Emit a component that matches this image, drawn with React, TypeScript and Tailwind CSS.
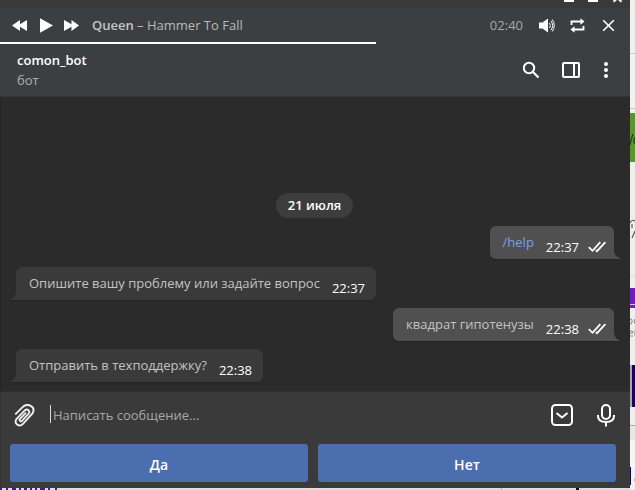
import React from "react";

type MessageProps = { text: string; time: string; out?: boolean; link?: boolean };

function Checks() {
  return (
    <svg className="ml-[9px] h-[12px] w-[19px] shrink-0" viewBox="0 0 19 12" fill="none" stroke="#fff" strokeWidth="1.8">
      <path d="M.8 6.200 4.500 9.800 12.300 1.200M7.800 9.200 9 10.200 17.400 1.200" />
    </svg>
  );
}

function Message({ text, time, out, link }: MessageProps) {
  return (
    <div className={out ? "flex justify-end pr-[10px]" : "flex pl-[10px]"}>
      {!out && (
        <svg className="h-[34px] w-[6px] shrink-0" viewBox="0 0 6 34">
          <path d="M6 24v9H0v-.8C4 31 6 28 6 24Z" fill="#3a3a3a" />
          <path d="M0 33h6v1H0z" fill="#232323" />
        </svg>
      )}
      <div
        className={
          out
            ? "flex h-[33px] rounded-t-[6px] rounded-bl-[6px] bg-[#505050] pl-[13px] pr-[7px] shadow-[0_1px_0_#232323]"
            : "flex h-[33px] rounded-t-[6px] rounded-br-[6px] bg-[#3a3a3a] pl-[13px] pr-[11px] shadow-[0_1px_0_#232323]"
        }
      >
        <span className={link ? "pt-[7px] leading-[18px] text-[#78a0e8]" : "pt-[7px] leading-[18px] text-[#c3c3c3]"}>{text}</span>
        <span className="ml-[12px] flex items-center pt-[8px] leading-[18px] text-white">
          {time}
          {out && <Checks />}
        </span>
      </div>
      {out && (
        <svg className="h-[34px] w-[6px] shrink-0" viewBox="0 0 6 34">
          <path d="M0 24v9h6v-.8C2 31 0 28 0 24Z" fill="#505050" />
          <path d="M0 33h6v1H0z" fill="#232323" />
        </svg>
      )}
    </div>
  );
}

function TitleBar() {
  return (
    <div className="flex h-[8px] justify-end bg-[#3a3a3a] pr-[7px]">
      <svg className="h-[3px] w-[60px]" viewBox="0 0 60 3">
        <path d="M1 0h10v2H1zM25 0h10v2H25z" fill="#fff" />
        <path d="M54.500-2 50.500 1.800M54.500-2 58.500 1.800" stroke="#fff" strokeWidth="2" />
      </svg>
    </div>
  );
}

function Player() {
  return (
    <div>
      <div className="flex h-[34px] items-center bg-[#3c3f41]">
        <svg className="ml-[12px] h-[16px] w-[67px] shrink-0" viewBox="0 0 67 16" fill="#fff">
          <path d="M0 8.500 8 3v4.300L15 3v11l-7-4.300V14ZM28 1.200 41 8.500 28 15.800ZM67 8.500 59.500 3v4.300L52 3v11l7.500-4.300V14Z" />
        </svg>
        <div className="ml-[13px] flex-1 pt-[2px] text-[#b8b8b8]">
          <span className="font-[560] text-[#c5c5c5]">Queen</span> – Hammer To Fall
        </div>
        <span className="pt-[2px] text-[#a8a8a8]">02:40</span>
        <svg className="ml-[16px] h-[16px] w-[16px]" viewBox="0 0 16 16" fill="none" stroke="#fff">
          <path d="M0 5.500h3.500L9 1.500v14l-5.500-4H0z" fill="#fff" stroke="none" />
          <path d="M10.500 6q1.800 2.500 0 5M12 4q3.300 4.500 0 9M13.200 2.500q4.200 6 0 12" strokeWidth="1" />
        </svg>
        <svg className="ml-[15px] h-[16px] w-[15px]" viewBox="0 0 15 16" fill="none" stroke="#fff" strokeWidth="1.8">
          <path d="M1.500 8V4.500h9.500M13.500 9v3.500H4" />
          <path d="m10.500 1.200 4 3.300-4 3.300zM4.500 9.200.500 12.500l4 3.300z" fill="#fff" stroke="none" />
        </svg>
        <svg className="ml-[17px] mr-[15px] h-[16px] w-[13px]" viewBox="0 0 13 16" stroke="#fff" strokeWidth="1.6">
          <path d="m1.200 3.200 10.600 10.600M11.800 3.200 1.200 13.800" />
        </svg>
      </div>
      <div className="h-[2px] bg-[#3c3f41]">
        <div className="h-full w-[376px] bg-white" />
      </div>
    </div>
  );
}

function Header() {
  return (
    <div className="flex h-[53px] items-center border-b border-[#343638] bg-[#3c3f41] pl-[17px] pr-[15px]">
      <div className="flex-1 pb-[1px]">
        <div className="font-semibold leading-[20px] text-white">comon_bot</div>
        <div className="leading-[20px] text-[#b0b0b0]">бот</div>
      </div>
      <svg className="h-[18px] w-[92px]" viewBox="0 0 92 18" fill="none" stroke="#fff" strokeWidth="2">
        <circle cx="6" cy="7" r="5.200" />
        <path d="m10 11 5.500 5.500" strokeWidth="2.200" />
        <rect x="40" y="2" width="16" height="14" rx="1" />
        <path d="M51 2v14" />
        <g fill="#fff" stroke="none">
          <circle cx="83" cy="3" r="2" />
          <circle cx="83" cy="9" r="2" />
          <circle cx="83" cy="15" r="2" />
        </g>
      </svg>
    </div>
  );
}

function Composer() {
  return (
    <div className="mb-[5px] flex h-[48px] items-center border-t border-[#303030] pl-[14px] pr-[14px]">
      <svg className="h-[24px] w-[22px] shrink-0" viewBox="0 0 22 24" fill="none" stroke="#eee" strokeWidth="1.900" strokeLinecap="round">
        <path d="M1.800 9.800 8.300 3.300c5-5 14-1 10.200 6.200L9 19.800c-4 4-9.500-.5-6.400-5L10.500 6.700c3-2.800 6.200.5 4 3.200l-6.500 7c-1.600 1.300-3.200-.6-2-2l5.500-5.700" />
      </svg>
      <div className="mb-[3px] ml-[14px] h-[18px] w-px bg-[#ddd]" />
      <div className="ml-[2px] flex-1 text-[#a8a8a8]">Написать сообщение...</div>
      <svg className="h-[24px] w-[65px] shrink-0" viewBox="0 0 65 24" fill="none" stroke="#fff" strokeWidth="2">
        <rect x="1" y="1" width="20" height="20" rx="3.500" />
        <path d="m5.500 9 5.500 4.500 5.500-4.500" />
        <rect x="51" y="1" width="8" height="14" rx="4" />
        <path d="M47 11v1c0 4 3.500 6 8 6s8-2 8-6v-1M55 18v4.500" />
      </svg>
    </div>
  );
}

function PageEdge() {
  return (
    <div className="flex h-[490px] w-[5px] flex-col overflow-hidden bg-[#efefef]">
      <div className="h-[53px] bg-[#f0f0f0]" />
      <div className="h-px bg-[#ccc]" />
      <div className="h-[54px] bg-[#f2f2f2]" />
      <div className="h-px bg-[#c5c5c5]" />
      <div className="h-[4px]" />
      <div className="h-[49px] bg-[#5a962d]">
        <svg className="h-[49px] w-[5px]" viewBox="0 0 5 49" fill="none" stroke="#24400f" strokeWidth="1.300">
          <path d="m0 32 1-5 2-6M5 24q-2 4 0 7" />
        </svg>
      </div>
      <svg className="h-[126px] w-[5px] shrink-0" viewBox="0 0 5 126" fill="none" stroke="#666">
        <path d="M0 61q2-4 5-2M2 62v4M5 69l-3 7" strokeWidth="1.300" />
        <path d="M0 114h5" stroke="#ddd" />
      </svg>
      <div className="h-[16px] bg-[#701fb8]" />
      <div className="h-px bg-[#d8bfea]" />
      <div className="h-[3px] bg-[#701fb8]" />
      <svg className="h-[57px] w-[5px] shrink-0" viewBox="0 0 5 57" fill="none" stroke="#888">
        <path d="M0 11q3 0 2 3t-2 2M5 11q-2 2 0 5M0 25h3q0-3-3-2M0 28h3M5 22v6" />
      </svg>
      <div className="h-[42px] border-l-2 border-[#aaa5b4] bg-[#200050]" />
      <div className="h-[18px]" />
      <div className="h-px bg-[#89b6ad]" />
      <div className="h-[14px] bg-[#e7e7e7]" />
      <div className="h-[27px] bg-[#f5f5f5]" />
      <div className="flex h-[18px] bg-[#f2f2f2]">
        <div className="w-px bg-[#160080]" />
        <div className="ml-[3px] mt-[11px] h-[4px] w-px bg-[#eebd67]" />
      </div>
    </div>
  );
}

export default function App() {
  return (
    <div className="flex h-[490px] w-[635px] overflow-hidden whitespace-nowrap font-['Open_Sans','Noto_Sans',sans-serif] text-[13px]">
      <div className="w-[630px] shrink-0">
        <div className="h-[488px] border-l border-[#353535] bg-[#3a3a3a]">
          <div className="-ml-px">
            <TitleBar />
            <Player />
            <Header />
          </div>
          <div className="-ml-px flex h-[294px] flex-col border-l border-[#262626] bg-[#2b2b2b] pt-[96px]">
            <div className="-ml-px flex flex-col">
              <div className="ml-[276px] flex h-[25px] w-[77px] items-center justify-center rounded-full bg-[#3d3d3d] font-semibold text-white">21 июля</div>
              <div className="mt-[8px] flex flex-col gap-[7px]">
                <Message text="/help" time="22:37" out link />
                <Message text="Опишите вашу проблему или задайте вопрос" time="22:37" />
                <Message text="квадрат гипотенузы" time="22:38" out />
                <Message text="Отправить в техподдержку?" time="22:38" />
              </div>
            </div>
          </div>
          <div className="-ml-px">
            <Composer />
            <div className="flex gap-[10px] pl-[10px] text-[14px] font-semibold text-white">
              <div className="flex h-[38px] w-[298px] items-center justify-center rounded-[3px] bg-[#4b6eaf] pt-[3px]">Да</div>
              <div className="flex h-[38px] w-[298px] items-center justify-center rounded-[3px] bg-[#4b6eaf] pt-[3px]">Нет</div>
            </div>
          </div>
        </div>
        <div className="h-[2px] bg-[#dedede]">
          <svg className="h-[2px] w-[630px]" viewBox="0 0 630 2" fill="#50109a">
            <path d="M0 0h2v2H0zM6 0h2v2H6zM12 0h4v2h-4zM19 0h2v2h-2zM24 0h3v2h-3zM30 0h2v2h-2zM35 0h2v2h-2zM40 0h5v2h-5zM48 0h2v2h-2zM55 0h2v2h-2z" />
            <path d="M576 0h3v2h-3z" fill="#160030" />
            <path d="M501 0h1v2h-1z" fill="#aaa" />
          </svg>
        </div>
      </div>
      <PageEdge />
    </div>
  );
}
